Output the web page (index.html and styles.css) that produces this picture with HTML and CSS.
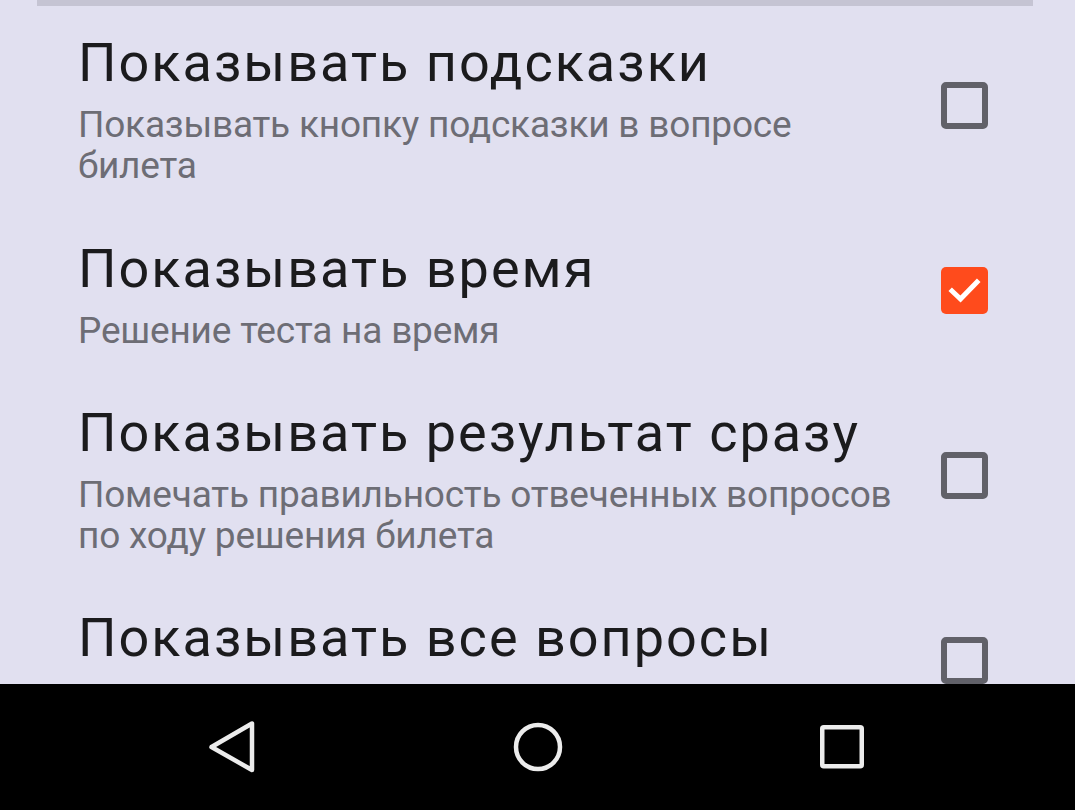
FILE: index.html
```html
<!DOCTYPE html>
<html lang="ru">
<head>
<meta charset="utf-8">
<link rel="stylesheet" href="styles.css">
</head>
<body>
<div class="screen">
  <div class="content">
    <div class="divider"></div>
    <div class="pref">
      <div class="pref-text">
        <div class="pref-title">Показывать подсказки</div>
        <div class="pref-summary">Показывать кнопку подсказки в вопросе билета</div>
      </div>
      <div class="checkbox"></div>
    </div>
    <div class="pref">
      <div class="pref-text">
        <div class="pref-title">Показывать время</div>
        <div class="pref-summary">Решение теста на время</div>
      </div>
      <div class="checkbox checked">
        <svg viewBox="0 0 47 47" width="47" height="47"><path d="M11 24 L19.5 32 L36 15" fill="none" stroke="#fff" stroke-width="5" stroke-linecap="square"/></svg>
      </div>
    </div>
    <div class="pref">
      <div class="pref-text">
        <div class="pref-title">Показывать результат сразу</div>
        <div class="pref-summary">Помечать правильность отвеченных вопросов по ходу решения билета</div>
      </div>
      <div class="checkbox"></div>
    </div>
    <div class="pref pref-last">
      <div class="pref-text">
        <div class="pref-title">Показывать все вопросы</div>
      </div>
      <div class="checkbox"></div>
    </div>
  </div>
  <nav class="navbar">
    <div class="nav-btn">
      <svg viewBox="0 0 60 60" width="60" height="60"><path d="M48 6.5 L48 53 L7.5 30 Z" fill="none" stroke="#ececec" stroke-width="4.5" stroke-linejoin="round"/></svg>
    </div>
    <div class="nav-btn">
      <svg viewBox="0 0 60 60" width="60" height="60"><circle cx="30" cy="30" r="22" fill="none" stroke="#ececec" stroke-width="4.5"/></svg>
    </div>
    <div class="nav-btn">
      <svg viewBox="0 0 60 60" width="60" height="60"><rect x="10.25" y="10.25" width="39.5" height="39" rx="1.5" fill="none" stroke="#ececec" stroke-width="4.5"/></svg>
    </div>
  </nav>
</div>
</body>
</html>
```
FILE: styles.css
```css
* { box-sizing: border-box; }
html, body { margin: 0; padding: 0; }
body {
  font-family: Roboto, "Noto Sans", "DejaVu Sans", sans-serif;
  background: #000;
}
.screen {
  width: 1075px;
  height: 810px;
  display: flex;
  flex-direction: column;
  overflow: hidden;
}
.content {
  height: 684px;
  flex: none;
  background: #e1e0f0;
  overflow: hidden;
}
.divider {
  height: 6px;
  margin: 0 42px 0 37px;
  background: #c5c4d3;
}
.pref {
  display: flex;
  align-items: center;
  padding: 0 87px 0 78px;
  min-height: 165px;
}
.pref-text {
  flex: 1;
  padding: 25px 0;
}
.pref-title {
  font-size: 54px;
  line-height: 64px;
  letter-spacing: 2px;
  color: #1b1b1d;
  white-space: nowrap;
}
.pref-summary {
  font-size: 37px;
  line-height: 41px;
  letter-spacing: -0.2px;
  color: #6d6d75;
  margin-top: 9px;
  max-width: 830px;
}
.checkbox {
  flex: none;
  width: 47px;
  height: 47px;
  margin-left: 33px;
  margin-bottom: 6px;
  border: 6px solid #616169;
  border-radius: 5px;
}
.pref-last {
  align-items: flex-start;
  min-height: 0;
}
.pref-last .checkbox {
  margin-top: 56px;
  margin-bottom: 0;
}
.checkbox.checked {
  border: none;
  background: #ff4b1c;
}
.checkbox svg { display: block; }
.navbar {
  flex: 1;
  background: #000;
  display: flex;
  justify-content: center;
  align-items: center;
  gap: 244px;
}
.nav-btn {
  width: 60px;
  height: 60px;
  display: flex;
  align-items: center;
  justify-content: center;
}
.nav-btn svg { display: block; }
```
